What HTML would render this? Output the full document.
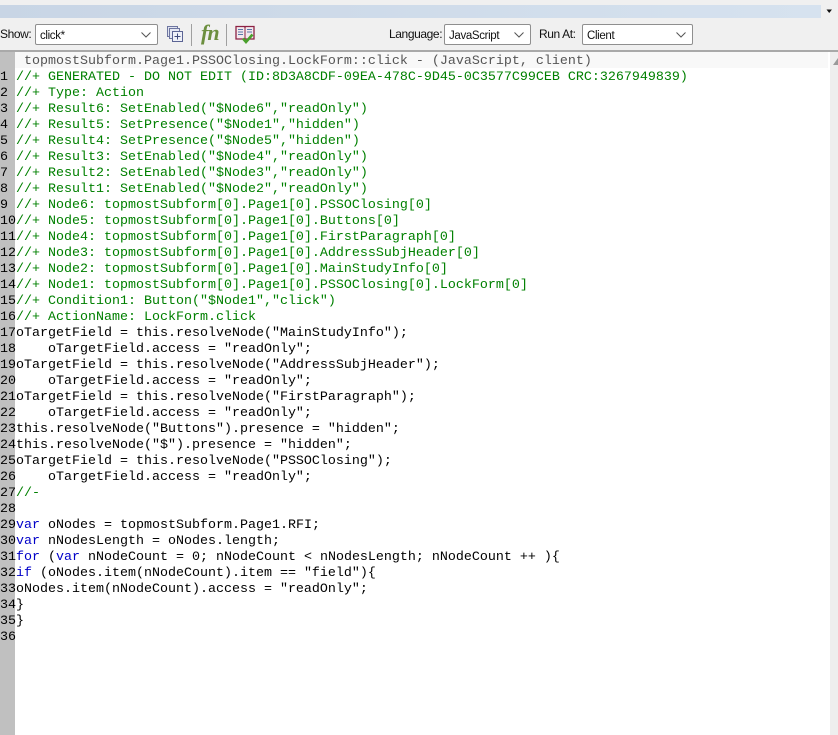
<!DOCTYPE html>
<html><head><meta charset="utf-8">
<style>
html,body{margin:0;padding:0;background:#fff;}
#p{position:relative;width:838px;height:735px;overflow:hidden;background:#fff;font-family:"Liberation Sans",sans-serif;}
#p div{position:absolute;}
.lbl{font-size:12px;letter-spacing:-.4px;color:#111;line-height:16px;white-space:nowrap;}
.sel{background:#fff;border:1px solid #8f8f8f;border-radius:2px;box-sizing:border-box;height:21px;top:24px;font-size:11.5px;letter-spacing:-.35px;line-height:22px;color:#111;padding-left:4px;}
.sel svg{position:absolute;top:6px;right:5px;}
.r{left:0;height:16px;width:830px;margin-top:2px;font:13.33px/16px "Liberation Mono",monospace;white-space:pre;color:#000;}
.n{left:0;width:15px;overflow:visible;}
.c{left:16px;}
.g{color:#008000;}
.k{color:#0000c8;}
</style></head><body>
<div id="p">
<div style="left:0;top:0;width:838px;height:51px;background:#f0f0f0"></div>
<div style="left:0;top:5px;width:821px;height:13px;background:linear-gradient(90deg,#c8d5e5,#d6e2ef)"></div>
<svg style="position:absolute;left:826px;top:9px" width="7" height="5"><path d="M0.5 0.5H6L3.2 4z" fill="#111"/></svg>
<div style="left:0;top:50px;width:838px;height:1.5px;background:#a9a9a9"></div>

<div class="lbl" style="left:0;top:26px">Show:</div>
<div class="sel" style="left:35px;width:123px">click*<svg width="12" height="8"><path d="M1.5 1.5L6 6L10.5 1.5" fill="none" stroke="#555" stroke-width="1"/></svg></div>

<svg style="position:absolute;left:166px;top:25px" width="18" height="18">
<rect x="1.5" y="1.5" width="10" height="10" fill="#dfe3f0" stroke="#6d75a0"/>
<rect x="3.5" y="3.5" width="10" height="10" fill="#e6e9f4" stroke="#6d75a0"/>
<rect x="6.5" y="6.5" width="10" height="10" fill="#eef0f8" stroke="#5b6494"/>
<path d="M11.5 8.5V14.5M8.5 11.5H14.5" stroke="#3f4a7c"/>
</svg>
<div style="left:191px;top:24px;width:1px;height:22px;background:#a0a0a0"></div>
<div style="left:201px;top:20px;width:22px;height:24px;font:italic bold 22px/26px 'Liberation Serif',serif;color:#6c8f3f;letter-spacing:-1px">fn</div>
<div style="left:226px;top:24px;width:1px;height:22px;background:#a0a0a0"></div>
<svg style="position:absolute;left:235px;top:25px" width="20" height="20">
<path d="M1 1.5H9.5L10 2.5L10.500 1.500H19V14H1z" fill="#f3e9ee" stroke="#8c2244" stroke-width="1.300"/>
<path d="M10 2V14" stroke="#8c2244"/>
<path d="M3 4.500H8M3 7H8M3 9.500H8M12 4.500H17M12 7H17" stroke="#5878a8"/>
<path d="M8 13.500L11 17L17.500 9.500" fill="none" stroke="#4aa02c" stroke-width="2.600"/>
</svg>

<div class="lbl" style="left:389px;top:26px">Language:</div>
<div class="sel" style="left:444px;width:87px">JavaScript<svg width="12" height="8"><path d="M1.5 1.500L6 6L10.500 1.500" fill="none" stroke="#555"/></svg></div>
<div class="lbl" style="left:539px;top:26px">Run At:</div>
<div class="sel" style="left:582px;width:111px">Client<svg width="12" height="8"><path d="M1.500 1.500L6 6L10.500 1.500" fill="none" stroke="#555"/></svg></div>

<div style="left:0;top:52px;width:15px;height:683px;background:#c0c0c0"></div>
<div style="left:15px;top:52px;width:813px;height:16px;background:#f8f8f8"></div>
<div style="left:830px;top:52px;width:8px;height:683px;background:#eeeeee"></div>
<svg style="position:absolute;left:833px;top:58px" width="5" height="7"><path d="M5 0V7H0z" fill="#9a9a9a"/></svg>

<div class="r" style="top:52px;left:24px;color:#555">topmostSubform.Page1.PSSOClosing.LockForm::click - (JavaScript, client)</div>

<div class="r n" style="top:68px">1</div><div class="r c g" style="top:68px">//+ GENERATED - DO NOT EDIT (ID:8D3A8CDF-09EA-478C-9D45-0C3577C99CEB CRC:3267949839)</div>
<div class="r n" style="top:84px">2</div><div class="r c g" style="top:84px">//+ Type: Action</div>
<div class="r n" style="top:100px">3</div><div class="r c g" style="top:100px">//+ Result6: SetEnabled("$Node6","readOnly")</div>
<div class="r n" style="top:116px">4</div><div class="r c g" style="top:116px">//+ Result5: SetPresence("$Node1","hidden")</div>
<div class="r n" style="top:132px">5</div><div class="r c g" style="top:132px">//+ Result4: SetPresence("$Node5","hidden")</div>
<div class="r n" style="top:148px">6</div><div class="r c g" style="top:148px">//+ Result3: SetEnabled("$Node4","readOnly")</div>
<div class="r n" style="top:164px">7</div><div class="r c g" style="top:164px">//+ Result2: SetEnabled("$Node3","readOnly")</div>
<div class="r n" style="top:180px">8</div><div class="r c g" style="top:180px">//+ Result1: SetEnabled("$Node2","readOnly")</div>
<div class="r n" style="top:196px">9</div><div class="r c g" style="top:196px">//+ Node6: topmostSubform[0].Page1[0].PSSOClosing[0]</div>
<div class="r n" style="top:212px">10</div><div class="r c g" style="top:212px">//+ Node5: topmostSubform[0].Page1[0].Buttons[0]</div>
<div class="r n" style="top:228px">11</div><div class="r c g" style="top:228px">//+ Node4: topmostSubform[0].Page1[0].FirstParagraph[0]</div>
<div class="r n" style="top:244px">12</div><div class="r c g" style="top:244px">//+ Node3: topmostSubform[0].Page1[0].AddressSubjHeader[0]</div>
<div class="r n" style="top:260px">13</div><div class="r c g" style="top:260px">//+ Node2: topmostSubform[0].Page1[0].MainStudyInfo[0]</div>
<div class="r n" style="top:276px">14</div><div class="r c g" style="top:276px">//+ Node1: topmostSubform[0].Page1[0].PSSOClosing[0].LockForm[0]</div>
<div class="r n" style="top:292px">15</div><div class="r c g" style="top:292px">//+ Condition1: Button("$Node1","click")</div>
<div class="r n" style="top:308px">16</div><div class="r c g" style="top:308px">//+ ActionName: LockForm.click</div>
<div class="r n" style="top:324px">17</div><div class="r c" style="top:324px">oTargetField = this.resolveNode("MainStudyInfo");</div>
<div class="r n" style="top:340px">18</div><div class="r c" style="top:340px">    oTargetField.access = "readOnly";</div>
<div class="r n" style="top:356px">19</div><div class="r c" style="top:356px">oTargetField = this.resolveNode("AddressSubjHeader");</div>
<div class="r n" style="top:372px">20</div><div class="r c" style="top:372px">    oTargetField.access = "readOnly";</div>
<div class="r n" style="top:388px">21</div><div class="r c" style="top:388px">oTargetField = this.resolveNode("FirstParagraph");</div>
<div class="r n" style="top:404px">22</div><div class="r c" style="top:404px">    oTargetField.access = "readOnly";</div>
<div class="r n" style="top:420px">23</div><div class="r c" style="top:420px">this.resolveNode("Buttons").presence = "hidden";</div>
<div class="r n" style="top:436px">24</div><div class="r c" style="top:436px">this.resolveNode("$").presence = "hidden";</div>
<div class="r n" style="top:452px">25</div><div class="r c" style="top:452px">oTargetField = this.resolveNode("PSSOClosing");</div>
<div class="r n" style="top:468px">26</div><div class="r c" style="top:468px">    oTargetField.access = "readOnly";</div>
<div class="r n" style="top:484px">27</div><div class="r c g" style="top:484px">//-</div>
<div class="r n" style="top:500px">28</div>
<div class="r n" style="top:516px">29</div><div class="r c" style="top:516px"><span class="k">var</span> oNodes = topmostSubform.Page1.RFI;</div>
<div class="r n" style="top:532px">30</div><div class="r c" style="top:532px"><span class="k">var</span> nNodesLength = oNodes.length;</div>
<div class="r n" style="top:548px">31</div><div class="r c" style="top:548px"><span class="k">for</span> (<span class="k">var</span> nNodeCount = 0; nNodeCount &lt; nNodesLength; nNodeCount ++ ){</div>
<div class="r n" style="top:564px">32</div><div class="r c" style="top:564px"><span class="k">if</span> (oNodes.item(nNodeCount).item == "field"){</div>
<div class="r n" style="top:580px">33</div><div class="r c" style="top:580px">oNodes.item(nNodeCount).access = "readOnly";</div>
<div class="r n" style="top:596px">34</div><div class="r c" style="top:596px">}</div>
<div class="r n" style="top:612px">35</div><div class="r c" style="top:612px">}</div>
<div class="r n" style="top:628px">36</div>
</div>
</body></html>
